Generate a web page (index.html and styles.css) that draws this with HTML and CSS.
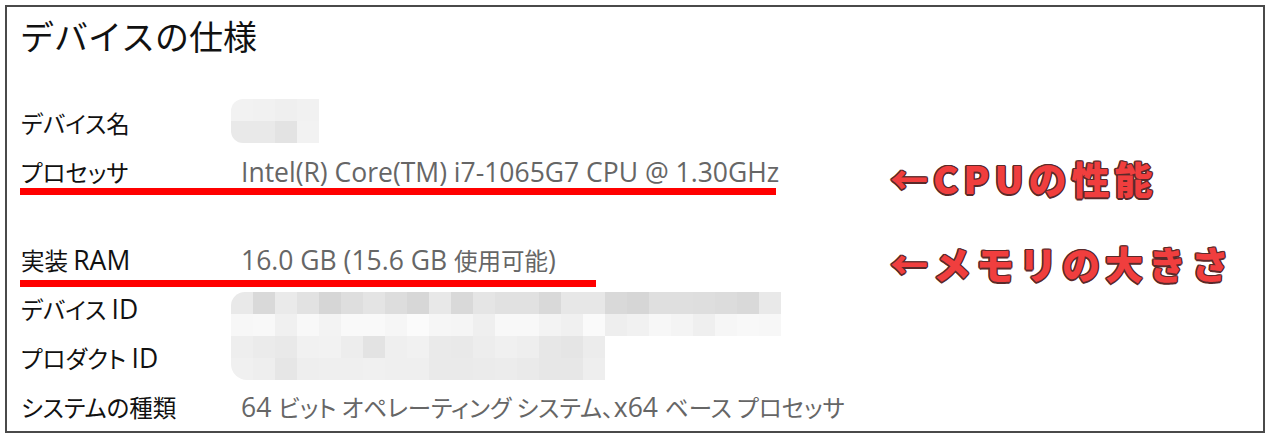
FILE: index.html
```html
<!DOCTYPE html>
<html lang="ja">
<head>
  <meta charset="UTF-8" />
  <title>デバイスの仕様</title>
  <link rel="stylesheet" href="styles.css">
</head>
<body>

  <div class="frame">
    <h1 class="title">デバイスの仕様</h1>

    <div class="specs">
      <div class="row">
        <div class="label">デバイス名</div>
        <div class="value"><div class="mosaic" id="nameMosaic"></div></div>
      </div>
      <div class="row row-gap">
        <div class="label">プロセッサ</div>
        <div class="value"><span class="en">Intel(R) Core(TM) i7-1065G7 CPU @ 1.30GHz</span></div>
      </div>
      <div class="row">
        <div class="label">実装 <span class="en">RAM</span></div>
        <div class="value"><span class="en">16.0 GB (15.6 GB </span>使用可能<span class="en">)</span></div>
      </div>
      <div class="row">
        <div class="label">デバイス <span class="en">ID</span></div>
        <div class="value"><div class="mosaic mosaic-ids" id="idMosaic"></div></div>
      </div>
      <div class="row">
        <div class="label">プロダクト <span class="en">ID</span></div>
        <div class="value"></div>
      </div>
      <div class="row">
        <div class="label">システムの種類</div>
        <div class="value"><span class="en">64 </span>ビット オペレーティング システム、<span class="en">x64 </span>ベース プロセッサ</div>
      </div>
    </div>

    <!-- annotations drawn over the screenshot -->
    <div class="mark mark-cpu"></div>
    <div class="mark mark-ram"></div>
    <div class="note note-cpu">←CPUの性能</div>
    <div class="note note-ram">←メモリの大きさ</div>
  </div>

  <script>
    const nameShades = [
      ["f2", "f1", "ef", "f1"],
      ["e9", "e9", "e3", "f2"]
    ];

    const idShades = [
      ["e9","d9","ea","e2","d6","de","e4","dd","d7","e8","d9","e5","e1","e1","d9","e7","e7","d9","d6","df","df","de","dc","d9","e9"],
      ["f7","f8","f0","f8","f3","f9","f9","f6","fb","f6","f5","ef","f8","f8","f3","f0","fa","ee","f1","f7","f4","ef","f6","f8","f7"],
      ["ee","eb","e9","f1","f2","ed","e3","ef","f1","ea","e9","ed","f0","ee","e7","e5","ec"],
      ["f0","ee","e6","ee","ef","ef","f0","ef","ef","ea","ea","eb","ec","ea","e7","e7","ee"]
    ];

    function buildMosaic(id, shades) {
      const box = document.getElementById(id);
      shades.forEach(function (row) {
        const line = document.createElement("div");
        line.className = "mosaic-row";
        row.forEach(function (s) {
          const cell = document.createElement("div");
          cell.className = "cell";
          cell.style.background = "#" + s + s + s;
          line.appendChild(cell);
        });
        box.appendChild(line);
      });
    }

    buildMosaic("nameMosaic", nameShades);
    buildMosaic("idMosaic", idShades);
  </script>

</body>
</html>
```

FILE: styles.css
```css
body {
  margin: 0;
  padding: 0;
  background: #ffffff;
  font-family: 'Noto Sans CJK JP', sans-serif;
}

.frame {
  position: relative;
  box-sizing: border-box;
  width: 1260px;
  height: 428px;
  margin: 5px;
  border: 2px solid #4a4a4a;
  padding: 7px 0 0 14px;
  overflow: hidden;
}

.title {
  margin: 0 0 0 -1px;
  font-weight: 400;
  font-size: 34px;
  line-height: 44px;
  color: #111;
}

.specs {
  margin-top: 40px;
}

.row {
  display: grid;
  grid-template-columns: 220px 1fr;
  height: 49px;
  align-items: center;
  font-size: 23.5px;
  font-feature-settings: "palt";
}

.row-gap {
  margin-bottom: 39px;
}

.label {
  color: #111;
  white-space: nowrap;
}

.value {
  position: relative;
  color: #666;
  height: 100%;
  display: flex;
  align-items: center;
  white-space: pre;
}

.en {
  font-family: 'Open Sans', sans-serif;
  font-size: 26.5px;
  font-feature-settings: normal;
}

.mosaic {
  margin-left: -10px;
  margin-top: -4px;
  border-radius: 12px 0 0 12px;
  overflow: hidden;
}

.mosaic-ids {
  position: absolute;
  top: 8px;
  left: 0;
  margin-top: 0;
  border-radius: 14px 0 0 16px;
}

.mosaic-row {
  display: flex;
}

.cell {
  width: 22px;
  height: 22px;
}

.mark {
  position: absolute;
  left: 13px;
  height: 7px;
  background: #ff0000;
}

.mark-cpu {
  top: 181px;
  width: 756px;
}

.mark-ram {
  top: 273px;
  width: 576px;
}

.note {
  position: absolute;
  left: 883px;
  font-weight: 900;
  font-size: 38px;
  line-height: 38px;
  letter-spacing: 5px;
  color: #f03e3e;
  text-shadow:
    1.5px 0 0 #5a2a2a, -1.5px 0 0 #5a2a2a,
    0 1.5px 0 #5a2a2a, 0 -1.5px 0 #5a2a2a,
    1px 1px 0 #5a2a2a, -1px -1px 0 #5a2a2a,
    1px -1px 0 #5a2a2a, -1px 1px 0 #5a2a2a;
}

.note-cpu {
  top: 152px;
}

.note-ram {
  top: 237px;
}
```
